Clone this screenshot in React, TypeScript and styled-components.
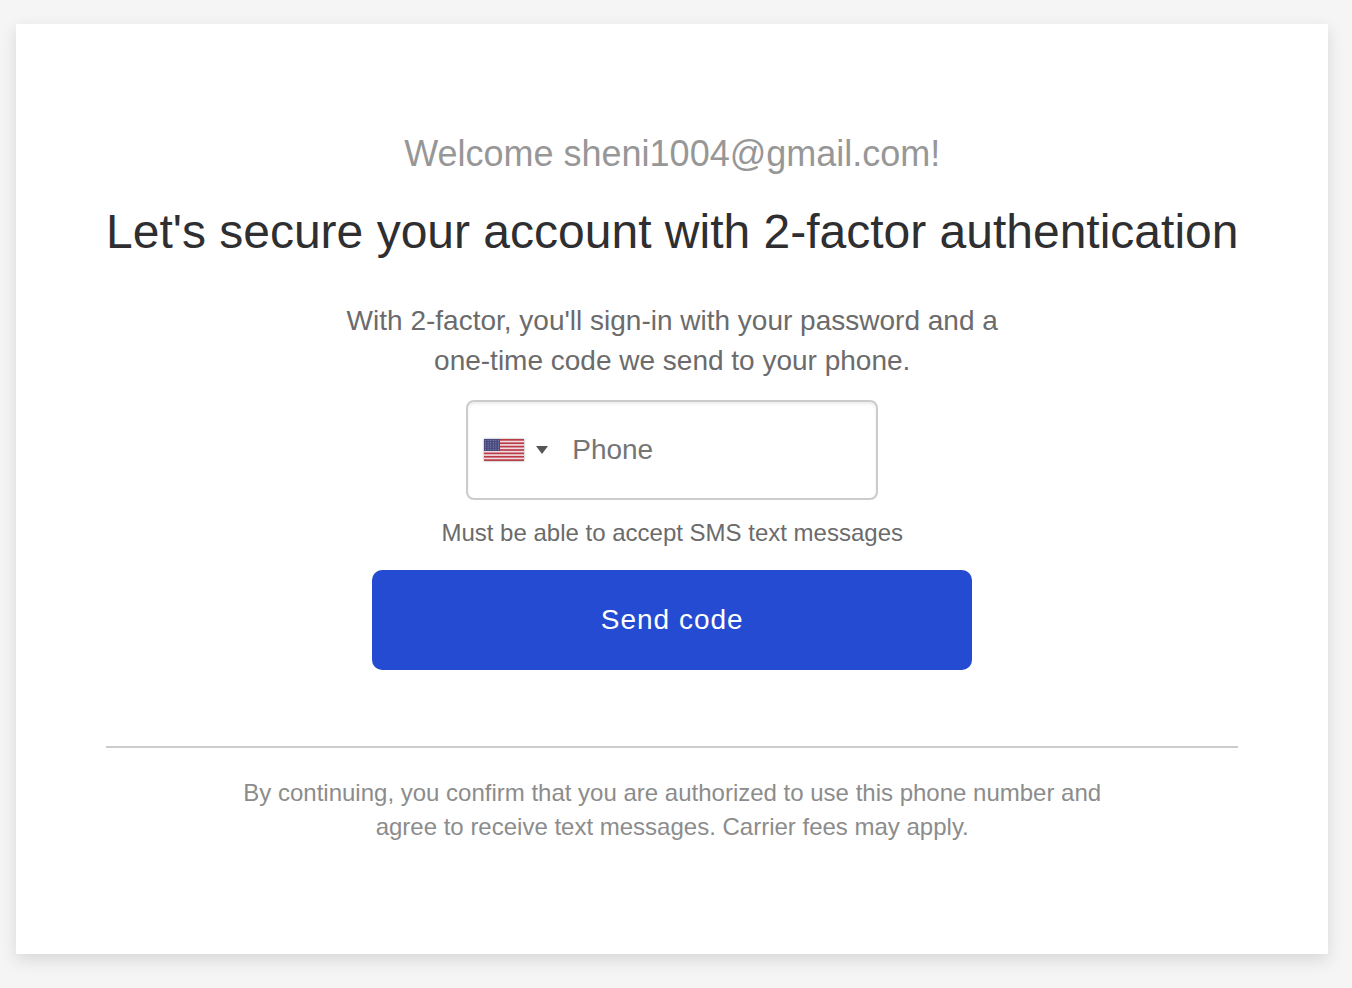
import React from "react";
import styled, { createGlobalStyle } from "styled-components";

const GlobalStyle = createGlobalStyle`
  * { box-sizing: border-box; }
  body {
    margin: 0;
    background: #f5f5f5;
    font-family: "Liberation Sans", Arial, sans-serif;
    color: #2f2f31;
  }
`;

const Page = styled.div`
  min-height: 100vh;
  padding: 24px 24px 34px 16px;
  display: flex;
`;

const Card = styled.main`
  flex: 1;
  display: flex;
  flex-direction: column;
  align-items: center;
  padding: 104px 90px 88px;
  background: #fff;
  box-shadow: 0 6px 16px rgba(0, 0, 0, 0.12);
  text-align: center;
`;

const Welcome = styled.p`
  margin: 0;
  font-size: 36px;
  line-height: 52px;
  color: #979797;
`;

const Title = styled.h1`
  margin: 20px 0 0;
  font-size: 48px;
  line-height: 64px;
  font-weight: 400;
  white-space: nowrap;
`;

const Lead = styled.p`
  max-width: 700px;
  margin: 37px 0 0;
  font-size: 28px;
  line-height: 40px;
  color: #6b6b6b;
`;

const Form = styled.form`
  display: flex;
  flex-direction: column;
  align-items: center;
  width: 600px;
  max-width: 100%;
  margin-top: 19px;
`;

const PhoneField = styled.div`
  display: flex;
  align-items: center;
  width: 412px;
  max-width: 100%;
  height: 100px;
  border: 2px solid #cccccc;
  border-radius: 8px;
  box-shadow: inset 0 2px 3px rgba(0, 0, 0, 0.08);
`;

const CountryButton = styled.button`
  display: flex;
  align-items: center;
  gap: 12px;
  height: 100%;
  padding: 0 8px 0 16px;
  border: 0;
  background: transparent;
`;

const FlagImage = styled.svg`
  box-shadow: 0 0 2px rgba(0, 0, 0, 0.4);
`;

const PhoneInput = styled.input`
  flex: 1;
  min-width: 0;
  height: 100%;
  padding: 0 16px;
  border: 0;
  background: transparent;
  font: 28px "Liberation Sans", Arial, sans-serif;
  color: #2f2f31;
  &::placeholder { color: #757575; opacity: 1; }
`;

const Hint = styled.p`
  margin: 16px 0 0;
  font-size: 24px;
  line-height: 34px;
  color: #6b6b6b;
`;

const SendButton = styled.button`
  width: 100%;
  height: 100px;
  margin-top: 20px;
  border: 0;
  border-radius: 10px;
  background: #244bd1;
  color: #fff;
  font: 28px "Liberation Sans", Arial, sans-serif;
  letter-spacing: 1px;
`;

const Legal = styled.footer`
  align-self: stretch;
  margin-top: 76px;
  padding-top: 28px;
  border-top: 2px solid #cccccc;
`;

const LegalText = styled.p`
  max-width: 900px;
  margin: 0 auto;
  font-size: 24px;
  line-height: 34px;
  color: #8c8c8c;
`;

const stripes = [0, 2, 4, 6, 8, 10, 12];
const starRows = [0, 1, 2, 3, 4];
const starColumns = [0, 1, 2, 3, 4, 5];

function Flag() {
  return (
    <FlagImage width="40" height="22" viewBox="0 0 40 22" aria-hidden="true">
      <rect width="40" height="22" fill="#efdcdf" />
      {stripes.map((n) => (
        <rect key={n} y={(n * 22) / 13} width="40" height={22 / 13} fill="#bb3a48" />
      ))}
      <rect width="16" height="12" fill="#484a80" />
      {starRows.map((row) =>
        starColumns.map((column) => (
          <circle
            key={`${row}-${column}`}
            cx={1.5 + column * 2.6}
            cy={1.5 + row * 2.2}
            r="0.5"
            fill="#9a9bbd"
          />
        ))
      )}
    </FlagImage>
  );
}

export default function App() {
  return (
    <>
      <GlobalStyle />
      <Page>
        <Card>
          <Welcome>Welcome sheni1004@gmail.com!</Welcome>
          <Title>Let's secure your account with 2-factor authentication</Title>
          <Lead>
            With 2-factor, you'll sign-in with your password and a one-time code we send to your
            phone.
          </Lead>
          <Form onSubmit={(event) => event.preventDefault()}>
            <PhoneField>
              <CountryButton type="button" aria-label="Country: United States">
                <Flag />
                <svg width="12" height="8" viewBox="0 0 12 8" aria-hidden="true">
                  <path d="M0 0h12L6 8z" fill="#555" />
                </svg>
              </CountryButton>
              <PhoneInput type="tel" placeholder="Phone" aria-label="Phone" aria-describedby="hint" />
            </PhoneField>
            <Hint id="hint">Must be able to accept SMS text messages</Hint>
            <SendButton type="submit">Send code</SendButton>
          </Form>
          <Legal>
            <LegalText>
              By continuing, you confirm that you are authorized to use this phone number and agree
              to receive text messages. Carrier fees may apply.
            </LegalText>
          </Legal>
        </Card>
      </Page>
    </>
  );
}
